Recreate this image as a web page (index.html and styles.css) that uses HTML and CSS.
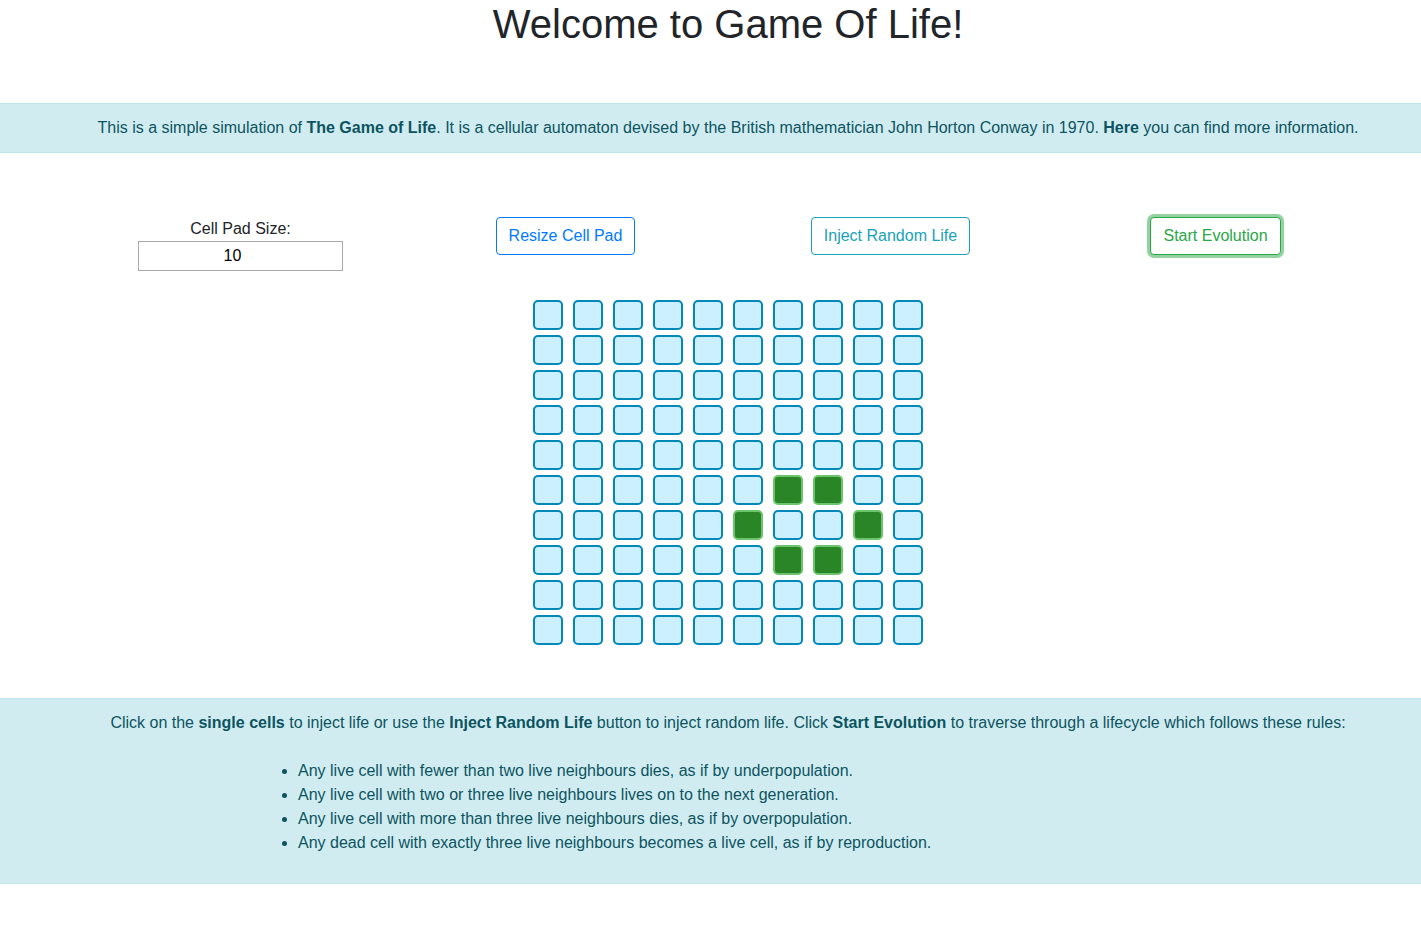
FILE: index.html
```html
<!DOCTYPE html>
<html lang="en">
<head>
<meta charset="utf-8">
<title>Game Of Life</title>
<link rel="stylesheet" href="styles.css">
</head>
<body>
<div class="page">
  <h1 class="title">Welcome to Game Of Life!</h1>
  <div class="alert intro">This is a simple simulation of <b>The Game of Life</b>. It is a cellular automaton devised by the British mathematician John Horton Conway in 1970. <b>Here</b> you can find more information.</div>

  <div class="controls">
    <div class="ctrl">
      <label class="size-label" for="size">Cell Pad Size:</label>
      <input id="size" class="size-input" type="text" value="10">
    </div>
    <div class="ctrl"><button class="btn btn-primary">Resize Cell Pad</button></div>
    <div class="ctrl"><button class="btn btn-info">Inject Random Life</button></div>
    <div class="ctrl"><button class="btn btn-success focused">Start Evolution</button></div>
  </div>

  <div class="pad">
    <div class="cell"></div><div class="cell"></div><div class="cell"></div><div class="cell"></div><div class="cell"></div><div class="cell"></div><div class="cell"></div><div class="cell"></div><div class="cell"></div><div class="cell"></div>
    <div class="cell"></div><div class="cell"></div><div class="cell"></div><div class="cell"></div><div class="cell"></div><div class="cell"></div><div class="cell"></div><div class="cell"></div><div class="cell"></div><div class="cell"></div>
    <div class="cell"></div><div class="cell"></div><div class="cell"></div><div class="cell"></div><div class="cell"></div><div class="cell"></div><div class="cell"></div><div class="cell"></div><div class="cell"></div><div class="cell"></div>
    <div class="cell"></div><div class="cell"></div><div class="cell"></div><div class="cell"></div><div class="cell"></div><div class="cell"></div><div class="cell"></div><div class="cell"></div><div class="cell"></div><div class="cell"></div>
    <div class="cell"></div><div class="cell"></div><div class="cell"></div><div class="cell"></div><div class="cell"></div><div class="cell"></div><div class="cell"></div><div class="cell"></div><div class="cell"></div><div class="cell"></div>
    <div class="cell"></div><div class="cell"></div><div class="cell"></div><div class="cell"></div><div class="cell"></div><div class="cell"></div><div class="cell live"></div><div class="cell live"></div><div class="cell"></div><div class="cell"></div>
    <div class="cell"></div><div class="cell"></div><div class="cell"></div><div class="cell"></div><div class="cell"></div><div class="cell live"></div><div class="cell"></div><div class="cell"></div><div class="cell live"></div><div class="cell"></div>
    <div class="cell"></div><div class="cell"></div><div class="cell"></div><div class="cell"></div><div class="cell"></div><div class="cell"></div><div class="cell live"></div><div class="cell live"></div><div class="cell"></div><div class="cell"></div>
    <div class="cell"></div><div class="cell"></div><div class="cell"></div><div class="cell"></div><div class="cell"></div><div class="cell"></div><div class="cell"></div><div class="cell"></div><div class="cell"></div><div class="cell"></div>
    <div class="cell"></div><div class="cell"></div><div class="cell"></div><div class="cell"></div><div class="cell"></div><div class="cell"></div><div class="cell"></div><div class="cell"></div><div class="cell"></div><div class="cell"></div>
  </div>

  <div class="alert rules">
    <p class="rules-text">Click on the <b>single cells</b> to inject life or use the <b>Inject Random Life</b> button to inject random life. Click <b>Start Evolution</b> to traverse through a lifecycle which follows these rules:</p>
    <ul class="rules-list">
      <li>Any live cell with fewer than two live neighbours dies, as if by underpopulation.</li>
      <li>Any live cell with two or three live neighbours lives on to the next generation.</li>
      <li>Any live cell with more than three live neighbours dies, as if by overpopulation.</li>
      <li>Any dead cell with exactly three live neighbours becomes a live cell, as if by reproduction.</li>
    </ul>
  </div>
</div>
</body>
</html>
```

FILE: styles.css
```css
html, body {
  margin: 0;
  padding: 0;
  overflow: hidden;
  background: #fff;
}

body {
  font-family: "Liberation Sans", Arial, sans-serif;
  font-size: 16px;
  line-height: 24px;
  color: #212529;
}

.page {
  width: 1456px;
}

.title {
  margin: 0 0 55px;
  font-size: 40px;
  line-height: 48px;
  font-weight: 400;
  text-align: center;
  color: #212529;
}

.alert {
  background: #d1ecf1;
  border-top: 1px solid #bee5eb;
  border-bottom: 1px solid #bee5eb;
  color: #0c5460;
  padding: 12px 0;
}

.alert b {
  font-weight: 700;
}

.intro {
  width: 1421px;
  box-sizing: border-box;
  padding-left: 35px;
  text-align: center;
}

.controls {
  display: grid;
  grid-template-columns: repeat(4, 325px);
  margin: 63px 0 0 78px;
  height: 84px;
}

.ctrl {
  display: flex;
  flex-direction: column;
  align-items: center;
}

.size-label {
  padding-top: 1px;
  line-height: 24px;
  color: #212529;
}

.size-input {
  width: 205px;
  height: 30px;
  box-sizing: border-box;
  border: 1px solid #a9a9a9;
  font-family: "Liberation Sans", Arial, sans-serif;
  font-size: 16px;
  text-align: center;
  color: #000;
  padding: 0 16px 0 0;
  margin: 0;
}

.btn {
  margin-top: 1px;
  font-family: "Liberation Sans", Arial, sans-serif;
  font-size: 16px;
  line-height: 24px;
  padding: 6px 12px;
  background: #fff;
  border: 1px solid;
  border-radius: 4px;
}

.btn-primary {
  color: #007bff;
  border-color: #007bff;
}

.btn-info {
  color: #17a2b8;
  border-color: #17a2b8;
}

.btn-success {
  color: #28a745;
  border-color: #28a745;
}

.focused {
  box-shadow: 0 0 0 3px rgba(40, 167, 69, 0.5);
}

.pad {
  display: grid;
  grid-template-columns: repeat(10, 30px);
  grid-auto-rows: 30px;
  column-gap: 10px;
  row-gap: 5px;
  width: 390px;
  margin: 0 auto 53px;
}

.cell {
  box-sizing: border-box;
  border: 2px solid #0088b8;
  border-radius: 5px;
  background: #ccf0ff;
}

.cell.live {
  border-color: #6cc46c;
  background: #2a8526;
}

.rules {
  width: 1421px;
  box-sizing: border-box;
}

.rules-text {
  margin: 0 0 24px;
  width: 1456px;
  text-align: center;
}

.rules-list {
  margin: 0 0 16px;
  padding-left: 298px;
}
```
